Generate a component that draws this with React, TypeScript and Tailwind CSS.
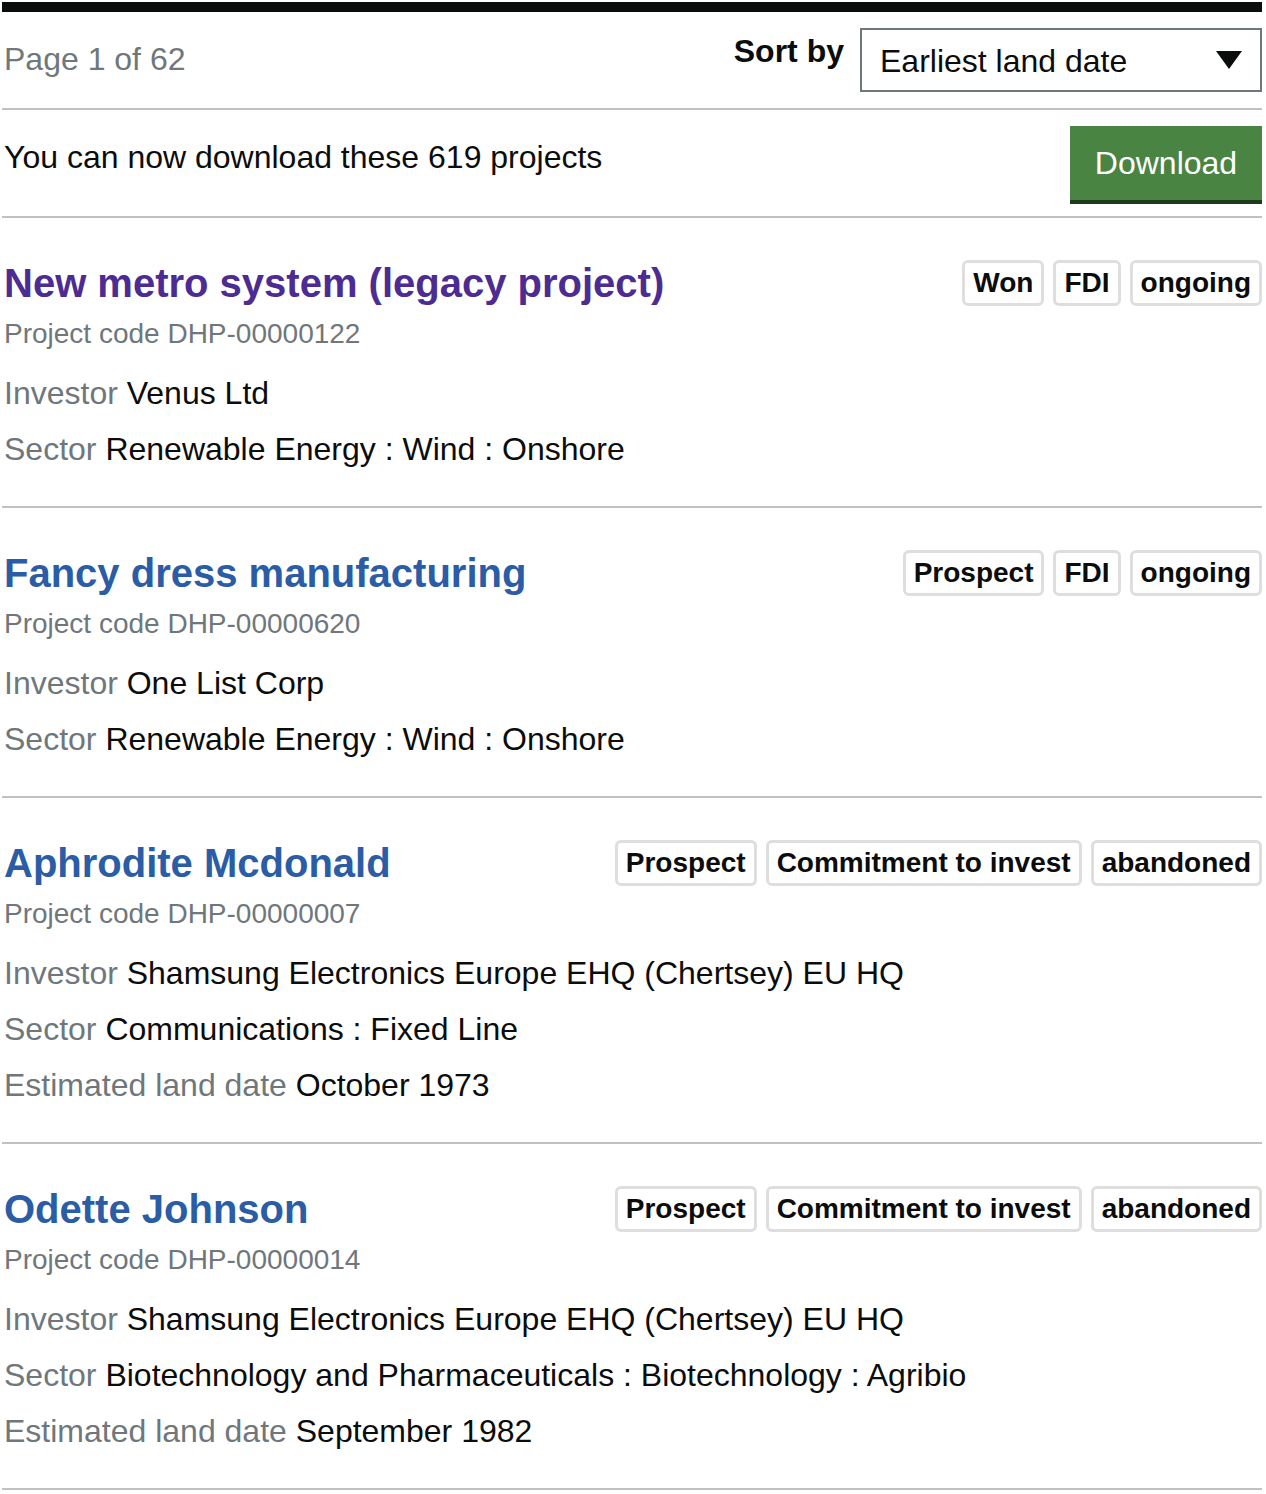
import React from 'react';

type Project = {
  title: string;
  visited?: boolean;
  tags: string[];
  code: string;
  investor: string;
  sector: string;
  landDate?: string;
};

const projects: Project[] = [
  {
    title: 'New metro system (legacy project)',
    visited: true,
    tags: ['Won', 'FDI', 'ongoing'],
    code: 'DHP-00000122',
    investor: 'Venus Ltd',
    sector: 'Renewable Energy : Wind : Onshore',
  },
  {
    title: 'Fancy dress manufacturing',
    tags: ['Prospect', 'FDI', 'ongoing'],
    code: 'DHP-00000620',
    investor: 'One List Corp',
    sector: 'Renewable Energy : Wind : Onshore',
  },
  {
    title: 'Aphrodite Mcdonald',
    tags: ['Prospect', 'Commitment to invest', 'abandoned'],
    code: 'DHP-00000007',
    investor: 'Shamsung Electronics Europe EHQ (Chertsey) EU HQ',
    sector: 'Communications : Fixed Line',
    landDate: 'October 1973',
  },
  {
    title: 'Odette Johnson',
    tags: ['Prospect', 'Commitment to invest', 'abandoned'],
    code: 'DHP-00000014',
    investor: 'Shamsung Electronics Europe EHQ (Chertsey) EU HQ',
    sector: 'Biotechnology and Pharmaceuticals : Biotechnology : Agribio',
    landDate: 'September 1982',
  },
];

function Row({ label, value }: { label: string; value: string }) {
  return (
    <div className="text-[32px] leading-[56px] text-[#0b0c0c]">
      <span className="text-[#6f777b]">{label}</span> {value}
    </div>
  );
}

function ProjectItem({ p }: { p: Project }) {
  return (
    <li className="border-b-2 border-[#bfc1c3] pl-[2px] pt-[40px] pb-[29px]">
      <div className="flex items-center justify-between h-[50px]">
        <a
          href="#"
          className={`text-[40px] font-bold leading-[50px] ${p.visited ? 'text-[#4c2c92]' : 'text-[#2b5ca6]'}`}
        >
          {p.title}
        </a>
        <div className="flex gap-[9px]">
          {p.tags.map((t) => (
            <span
              key={t}
              className="h-[46px] px-[8px] border-[3px] border-[#dedede] rounded-[6px] text-[28px] font-bold leading-[40px] text-[#0b0c0c]"
            >
              {t}
            </span>
          ))}
        </div>
      </div>
      <div className="mt-[6px] mb-[11px] text-[28px] leading-[40px] text-[#6f777b]">
        Project code {p.code}
      </div>
      <Row label="Investor" value={p.investor} />
      <Row label="Sector" value={p.sector} />
      {p.landDate && <Row label="Estimated land date" value={p.landDate} />}
    </li>
  );
}

export default function App() {
  return (
    <div className="bg-white min-h-[1494px] pt-[2px] font-['Liberation_Sans',Arial,sans-serif]">
      <div className="ml-[2px] w-[1260px]">
        <div className="h-[10px] bg-[#0b0c0c]" />

        <div className="flex items-start justify-between pt-[16px] pb-[16px] border-b-2 border-[#bfc1c3]">
          <div className="pl-[2px] text-[32px] leading-[62px] text-[#6f777b]">Page 1 of 62</div>
          <div className="flex items-start gap-[16px]">
            <label className="text-[32px] font-bold leading-[46px] text-[#0b0c0c]">Sort by</label>
            <div className="flex items-center justify-between w-[402px] h-[64px] border-2 border-[#6f777b] pl-[18px] pr-[18px]">
              <span className="text-[32px] leading-[40px] pt-[2px] text-[#0b0c0c]">Earliest land date</span>
              <svg width="26" height="18" viewBox="0 0 26 18">
                <path d="M0 0 H26 L13 18 Z" fill="#0b0c0c" />
              </svg>
            </div>
          </div>
        </div>

        <div className="flex items-start justify-between pt-[16px] pb-[12px] border-b-2 border-[#bfc1c3]">
          <div className="pl-[2px] text-[32px] leading-[62px] text-[#0b0c0c]">
            You can now download these 619 projects
          </div>
          <button className="w-[192px] h-[74px] bg-[#4a8443] shadow-[0_4px_0_#1f3a1c] mb-[4px] text-white text-[32px] leading-[70px]">
            Download
          </button>
        </div>

        <ul>
          {projects.map((p) => (
            <ProjectItem key={p.code} p={p} />
          ))}
        </ul>
      </div>
    </div>
  );
}
